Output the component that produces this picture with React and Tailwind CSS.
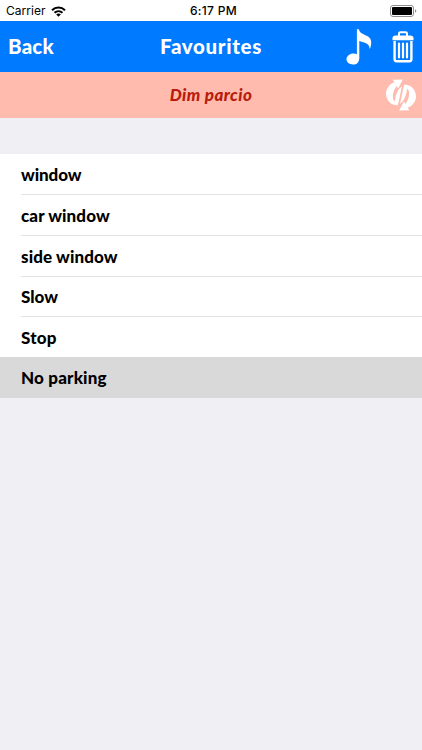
const rows = [
  { label: "window", style: "h-[41px] tracking-[-0.1px]" },
  { label: "car window", style: "h-[41px] tracking-[0.12px]" },
  { label: "side window", style: "h-[41px] tracking-[0.12px]" },
  { label: "Slow", style: "h-[40px] tracking-[0px]" },
  { label: "Stop", style: "h-[40px] tracking-[0.2px]" },
  { label: "No parking", style: "h-[41px] tracking-[0.18px]", selected: true },
];

function StatusBar() {
  return (
    <div className="grid h-[21px] grid-cols-3 items-center bg-white pt-px font-['Inter',sans-serif] text-[12px] leading-none text-black">
      <div className="flex items-center gap-[5px] pl-[6px]">
        <span className="tracking-[0.05px]">Carrier</span>
        <svg width="15" height="11" viewBox="0 0 15 11" fill="none" stroke="#000" strokeWidth="2">
          <path d="M1 4.2C4.7 .5 10.3 .5 14 4.2" />
          <path d="M3.5 6.8c2.3-2.2 5.7-2.2 8 0" />
          <path d="M5.2 8.4c1.3-1.2 3.3-1.2 4.6 0L7.5 10.8Z" fill="#000" stroke="none" />
        </svg>
      </div>
      <span className="pl-[5px] text-center font-medium tracking-[0.3px]">6:17 PM</span>
      <div className="flex justify-end pr-[5px]">
        <svg width="27" height="12" viewBox="0 0 27 12">
          <rect x=".5" y=".5" width="23" height="11" rx="2.5" fill="#fff" stroke="#8e8e8e" />
          <rect x="2" y="2" width="20" height="8" rx="1" fill="#000" />
          <path d="M25 4.2q1.3.5 1.3 1.8T25 7.8Z" fill="#8e8e8e" />
        </svg>
      </div>
    </div>
  );
}

function NoteIcon() {
  return (
    <svg width="26" height="36" viewBox="0 0 26 36" fill="#fff">
      <path d="M10.900.300h2c.5 2.800 2.600 4.400 6 5.600 4.300 1.600 6.300 3.700 6.300 7.400 0 2.600-.4 4.700-1.500 6.600-.2-3.500-2-5.200-5.600-6.300-2.200-.7-3.600-1.200-4.800-1.600v16.900c0 4.300-2.500 6.600-6.300 6.600C3.200 35.500.500 33.400.500 30.300c0-3.500 3.200-5.900 6.800-5.900 1.500 0 2.700.3 3.600.8Z" />
    </svg>
  );
}

function TrashIcon() {
  return (
    <svg width="22" height="32" viewBox="0 0 22 32" fill="none" stroke="#fff">
      <path d="M7 5V2.600Q7 1.300 8.300 1.300h5.400q1.300 0 1.300 1.300V5" strokeWidth="2" />
      <path d="M3.700 4.600h14.600q3.200 0 3.200 2.700v2H.5v-2Q.5 4.600 3.700 4.600Z" fill="#fff" stroke="none" />
      <path d="M2.600 10v18.300q0 1.900 1.900 1.900h13q1.900 0 1.900-1.900V10" strokeWidth="2.400" />
      <path d="M7 12.500v14M11 12.500v14M15 12.500v14" strokeWidth="2.200" strokeLinecap="round" />
    </svg>
  );
}

function SwapIcon() {
  return (
    <svg width="32" height="34" viewBox="0 0 32 34" fill="#fff">
      <path
        id="swap-arrow"
        d="M7.500 1.800 17.800 1.600 13.200 10.600 11.600 8C9 11.500 7.300 16 8 20.500 8.300 22 9.200 22.800 10 23.200 10.600 17.500 12 11.800 17 8.300 15.500 14 14.800 20 12.800 27.200 6.500 28 1 22.500 1 15.500 1 10.500 4.500 6 9.500 4.200Z"
      />
      <use href="#swap-arrow" transform="rotate(180 16 17)" />
    </svg>
  );
}

export default function App() {
  return (
    <main className="min-h-screen w-full bg-[#efeff4] font-['Lato',sans-serif]">
      <StatusBar />
      <header className="grid h-[51px] grid-cols-[1fr_auto_1fr] items-center bg-[#007aff] text-white">
        <button className="pl-[8px] text-left text-[20.500px] font-black leading-none tracking-[0.2px]">Back</button>
        <h1 className="text-[20.500px] font-black leading-none tracking-[0.680px]">Favourites</h1>
        <div className="flex items-center justify-end gap-[20px] pr-[8px]">
          <NoteIcon />
          <TrashIcon />
        </div>
      </header>
      <section className="grid h-[46px] grid-cols-[1fr_auto_1fr] items-center bg-[#ffbbad]">
        <span />
        <p className="pb-[2px] text-[17px] font-black italic leading-none tracking-[0.42px] text-[#b91c0c]">Dim parcio</p>
        <div className="flex justify-end pr-[5px]">
          <SwapIcon />
        </div>
      </section>
      <ul className="mt-[36px] bg-white">
        {rows.map((row, i) => (
          <li key={row.label} className={row.selected ? "bg-[#d9d9d9] pl-[21px]" : "pl-[21px]"}>
            <div
              className={`flex items-center text-[17px] font-black leading-none text-black ${row.style} ${
                i < 4 ? "border-b border-[#e3e3e6]" : ""
              }`}
            >
              {row.label}
            </div>
          </li>
        ))}
      </ul>
    </main>
  );
}
